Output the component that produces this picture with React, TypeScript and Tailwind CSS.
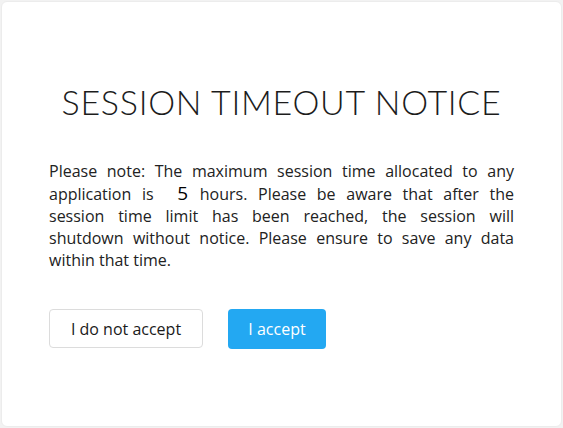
import React from 'react';

const lines: React.ReactNode[] = [
  'Please note: The maximum session time allocated to any',
  <>
    application is <span className="inline-block ml-[13px] mr-[1px] text-[19px] leading-[22px] text-black">5</span> hours. Please be aware that after the
  </>,
  'session time limit has been reached, the session will',
  'shutdown without notice. Please ensure to save any data',
];

const App: React.FC = () => {
  return (
    <div className="w-[563px] h-[428px] bg-[#f2f2f2] p-px font-['Open_Sans','Liberation_Sans',sans-serif]">
      <div className="h-full bg-white rounded-md border border-[#ececec] px-[47px] pt-[78px]">
        <h1 className="text-center font-['Lato',sans-serif] text-[34px] font-light tracking-[0.7px] text-[#1c1c1c] leading-[44px]">
          SESSION TIMEOUT NOTICE
        </h1>
        <div className="mt-[36px] text-[16px] leading-[22px] text-[#222]">
          {lines.map((l, i) => (
            <div key={i} className="text-justify [text-align-last:justify] whitespace-nowrap">
              {l}
            </div>
          ))}
          <div>within that time.</div>
        </div>
        <div className="mt-[38px] flex gap-[25px]">
          <button className="w-[154px] h-[39px] rounded border border-[#dcdcdc] bg-white text-[16px] text-[#1a1a1a]">
            I do not accept
          </button>
          <button className="w-[98px] h-[40px] rounded bg-[#23a8f2] text-[16px] text-white">
            I accept
          </button>
        </div>
      </div>
    </div>
  );
};

export default App;
